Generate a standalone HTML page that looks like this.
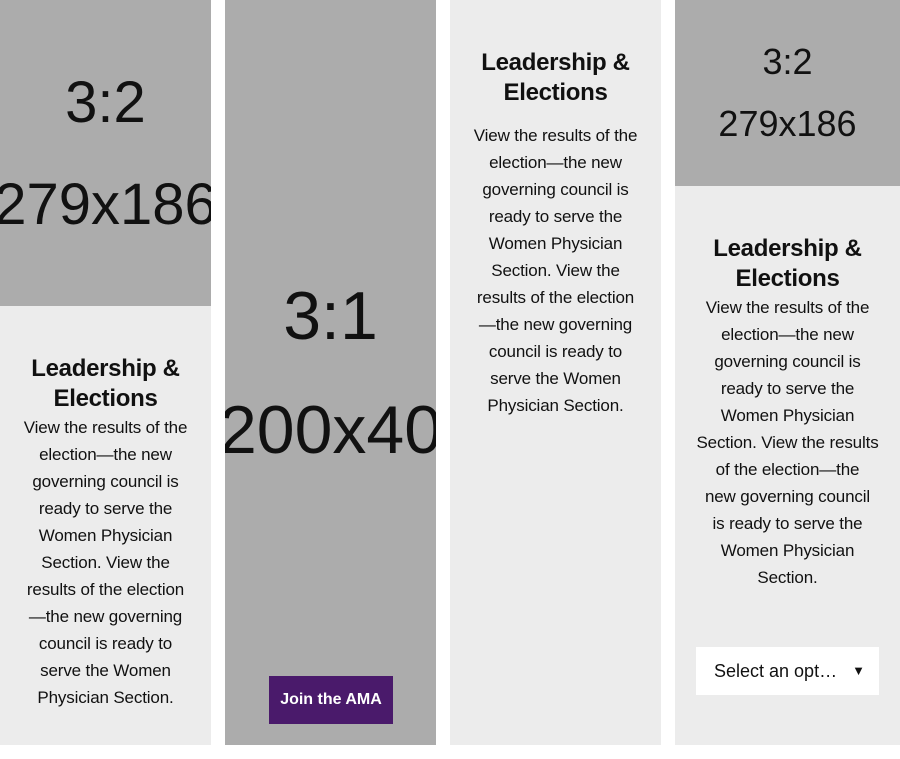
<!DOCTYPE html>
<html><head><style>
*{margin:0;padding:0;box-sizing:border-box}
body{width:900px;height:759px;background:#fff;position:relative;overflow:hidden;font-family:"Liberation Sans",sans-serif;color:#111}
.col{position:absolute;top:0;height:745px;background:#ececec;overflow:hidden}
.img{position:absolute;left:0;top:0;background:#acacac;width:100%;overflow:hidden}
.ph{position:absolute;left:-60px;right:-60px;text-align:center;color:#111;white-space:nowrap}
.h{position:absolute;left:0;right:0;text-align:center;font-weight:bold;font-size:24px;line-height:30px;letter-spacing:-0.3px}
.b{position:absolute;left:0;right:0;text-align:center;font-size:17px;line-height:27px;letter-spacing:-0.15px}
</style></head><body>
<div class="col" style="left:0;width:211px">
 <div class="img" style="height:306px">
  <div class="ph" style="top:70px;font-size:58px;line-height:66px">3:2</div>
  <div class="ph" style="top:172px;font-size:58px;line-height:66px">279x186</div>
 </div>
 <div class="h" style="top:354px">Leadership &amp;<br>Elections</div>
 <div class="b" style="top:414px">View the results of the<br>election—the new<br>governing council is<br>ready to serve the<br>Women Physician<br>Section. View the<br>results of the election<br>—the new governing<br>council is ready to<br>serve the Women<br>Physician Section.</div>
</div>
<div class="col" style="left:225px;width:211px;background:#acacac">
  <div class="ph" style="top:282px;font-size:68px;line-height:68px">3:1</div>
  <div class="ph" style="top:396px;font-size:68px;line-height:68px">200x40</div>
  <div style="position:absolute;left:44px;top:676px;width:124px;height:48px;background:#4a1a6b;color:#fff;font-weight:bold;font-size:16px;line-height:48px;text-align:center">Join the AMA</div>
</div>
<div class="col" style="left:450px;width:211px">
 <div class="h" style="top:48px">Leadership &amp;<br>Elections</div>
 <div class="b" style="top:122px">View the results of the<br>election—the new<br>governing council is<br>ready to serve the<br>Women Physician<br>Section. View the<br>results of the election<br>—the new governing<br>council is ready to<br>serve the Women<br>Physician Section.</div>
</div>
<div class="col" style="left:675px;width:225px">
 <div class="img" style="height:186px">
  <div class="ph" style="top:40px;font-size:36px;line-height:44px">3:2</div>
  <div class="ph" style="top:102px;font-size:36px;line-height:44px">279x186</div>
 </div>
 <div class="h" style="top:234px">Leadership &amp;<br>Elections</div>
 <div class="b" style="top:294px">View the results of the<br>election—the new<br>governing council is<br>ready to serve the<br>Women Physician<br>Section. View the results<br>of the election—the<br>new governing council<br>is ready to serve the<br>Women Physician<br>Section.</div>
 <div style="position:absolute;left:21px;top:647px;width:183px;height:48px;background:#fff;font-size:18px;line-height:48px;padding-left:18px;color:#111">Select an opt…<span style="position:absolute;right:14px;top:0;font-size:13px">▼</span></div>
</div>
</body></html>
